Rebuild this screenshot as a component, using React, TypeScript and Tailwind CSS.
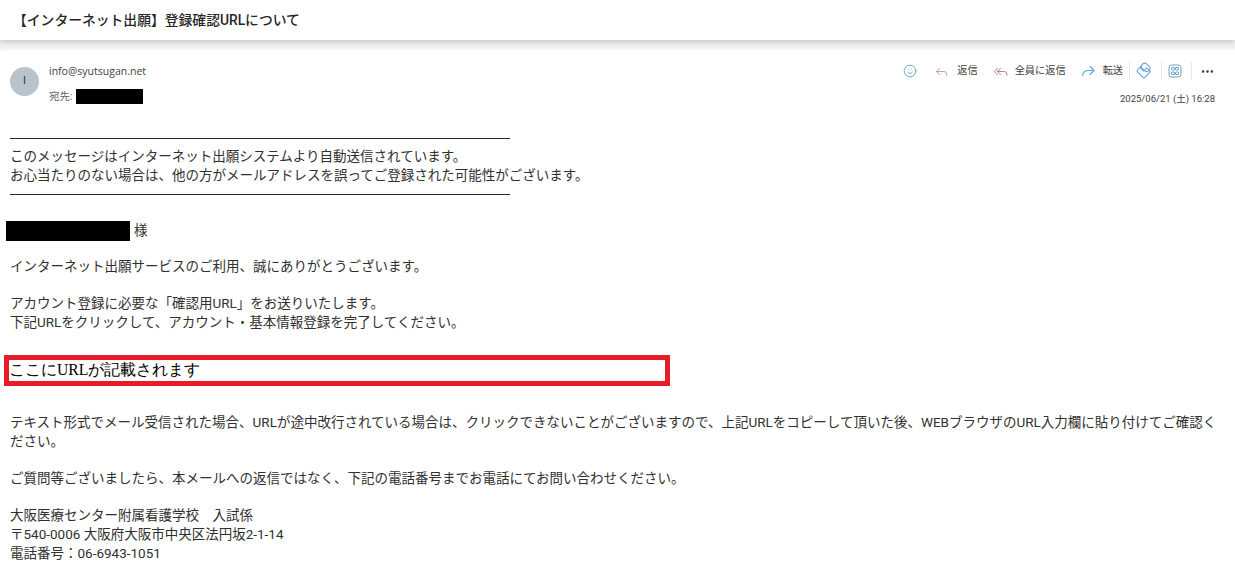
import { MoreHorizontal, Reply, ReplyAll, Smile } from 'lucide-react'

const sans = 'font-["Roboto","Noto_Sans_CJK_JP",sans-serif]'

function Redacted({ className }: { className: string }) {
  return <span className={`inline-block bg-black ${className}`} />
}

function ForwardIcon() {
  return (
    <svg width="16" height="16" viewBox="0 0 16 16" fill="none" stroke="#5fa6d8" strokeWidth="1.1" strokeLinecap="round" strokeLinejoin="round">
      <path d="M10 3.5 14 7.5 10 11.5" />
      <path d="M14 7.5H8.5C5.5 7.5 3 9.5 2.5 12.5" />
    </svg>
  )
}

function TagIcon() {
  return (
    <svg width="18" height="18" viewBox="0 0 18 18" fill="none" stroke="#6aa3d8" strokeWidth="1.1" strokeLinejoin="round">
      <rect x="6.2" y="2.2" width="9" height="6.4" rx="3.2" transform="rotate(42 10.7 5.4)" />
      <path d="M6 4.2 2.4 8.2a1.2 1.2 0 0 0 0 1.6l5.7 5.6a1.2 1.2 0 0 0 1.7 0l5.8-6-4-3.5L8.8 9 6 6.8Z" />
    </svg>
  )
}

function AppsIcon() {
  return (
    <svg width="14" height="14" viewBox="0 0 14 14" fill="none" stroke="#5a9bc4" strokeWidth="0.9">
      <rect x="1" y="1" width="12" height="12" rx="2.5" />
      <rect x="3.5" y="3.5" width="3" height="2.5" rx="0.5" />
      <rect x="7.5" y="3.5" width="3" height="2.5" rx="0.5" />
      <rect x="3.5" y="8" width="3" height="2.5" rx="0.5" />
      <rect x="7.5" y="8" width="3" height="2.5" rx="0.5" />
    </svg>
  )
}

export default function App() {
  return (
    <div className={`h-[561px] w-[1235px] overflow-hidden bg-[#f3f3f3] ${sans}`}>
      {/* Subject */}
      <header className="flex h-[40px] items-center bg-white pl-[13px] shadow-[0_2px_6px_rgba(0,0,0,0.2)]">
        <h1 className="text-[13.8px] font-medium text-[#262626]">【インターネット出願】登録確認URLについて</h1>
      </header>

      {/* Message */}
      <main className="mt-[10px] h-[511px] rounded-tl-[4px] bg-white">
        <div className="flex justify-between pl-[10px] pr-[20px] pt-[15px]">
          <div className="mt-[1px] flex gap-[10px]">
            <div className="mt-[1px] flex h-[29px] w-[29px] items-center justify-center rounded-full bg-[#b9c3cb] text-[11px] text-[#2f3942]">
              I
            </div>
            <div className="text-[10.5px] text-[#424242]">
              <div className='h-[15px] font-["Open_Sans",sans-serif] leading-[11px]'>info@syutsugan.net</div>
              <div className="mt-[8px] flex h-[15px] items-center gap-[3px]">
                <span className="text-[#616161]">宛先:</span>
                <Redacted className="h-[15px] w-[67px]" />
              </div>
            </div>
          </div>

          <div className="flex flex-col items-end">
            <div className="flex h-[12px] items-center text-[10.2px] text-[#424242]">
              <Smile size={14} strokeWidth={1.25} className="text-[#3f8fb5]" />
              <Reply size={15} strokeWidth={1.1} className="ml-[17px] text-[#b9679f]" />
              <span className="ml-[8px]">返信</span>
              <ReplyAll size={15} strokeWidth={1.4} className="ml-[15px] text-[#b9679f]" />
              <span className="ml-[7px]">全員に返信</span>
              <span className="ml-[14px]"><ForwardIcon /></span>
              <span className="ml-[7px]">転送</span>
              <span className="ml-[6px] h-[18px] border-l border-[#e8e8e8]" />
              <span className="ml-[5px]"><TagIcon /></span>
              <span className="ml-[8px] h-[18px] border-l border-[#e8e8e8]" />
              <span className="ml-[6px]"><AppsIcon /></span>
              <span className="ml-[9px] h-[18px] border-l border-[#e8e8e8]" />
              <MoreHorizontal size={15} className="ml-[8px] text-[#333]" />
            </div>
            <div className="mt-[15px] text-[9.5px] text-[#424242]">2025/06/21 (土) 16:28</div>
          </div>
        </div>

        {/* Body */}
        <div className="mt-[32px] text-[13.5px] leading-[19px] text-[#303030]">
          <div className="ml-[10px] w-[500px] border-t border-[#262626] pt-[8px]">
            <p>このメッセージはインターネット出願システムより自動送信されています。</p>
          </div>
          <p className="ml-[10px] w-[600px]">お心当たりのない場合は、他の方がメールアドレスを誤ってご登録された可能性がございます。</p>
          <div className="ml-[10px] mt-[9px] w-[500px] border-t border-[#262626]" />

          <div className="ml-[6px] mt-[26px] flex items-start gap-[4px]">
            <Redacted className="h-[20px] w-[124px]" />
            <span className="leading-[18px]">様</span>
          </div>

          <p className="ml-[10px] mt-[16px]">インターネット出願サービスのご利用、誠にありがとうございます。</p>
          <p className="ml-[10px] mt-[18px]">アカウント登録に必要な「確認用URL」をお送りいたします。</p>
          <p className="ml-[10px]">下記URLをクリックして、アカウント・基本情報登録を完了してください。</p>

          <div className='ml-[4px] mt-[23px] flex h-[31px] w-[666px] items-center border-[5px] border-[#e81c28] pb-[2px] font-["Liberation_Serif",serif] text-[15.7px] font-medium text-black'>
            ここにURLが記載されます
          </div>

          <p className="ml-[10px] mr-[15px] mt-[27px]">
            テキスト形式でメール受信された場合、URLが途中改行されている場合は、クリックできないことがございますので、上記URLをコピーして頂いた後、WEBブラウザのURL入力欄に貼り付けてご確認ください。
          </p>
          <p className="ml-[10px] mt-[18px]">ご質問等ございましたら、本メールへの返信ではなく、下記の電話番号までお電話にてお問い合わせください。</p>
          <p className="ml-[10px] mt-[18px]">大阪医療センター附属看護学校　入試係</p>
          <p className="ml-[10px]">〒540-0006 大阪府大阪市中央区法円坂2-1-14</p>
          <p className="ml-[10px]">電話番号：06-6943-1051</p>
        </div>
      </main>
    </div>
  )
}
